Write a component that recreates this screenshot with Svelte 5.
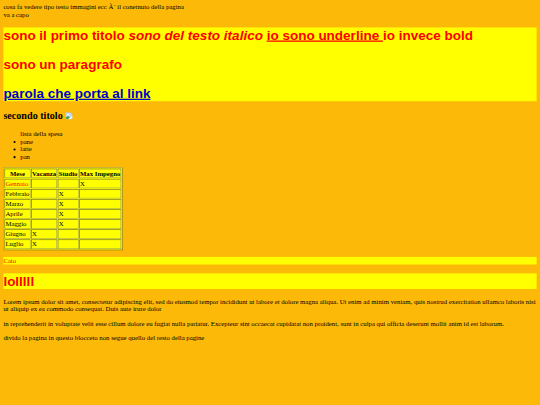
<script lang="ts">
  const shopping = ["pane", "latte", "pan"];
  const columns = ["Vacanza", "Studio", "Max Impegno"];

  const months = [
    { name: "Gennaio", column: 2 },
    { name: "Febbraio", column: 1 },
    { name: "Marzo", column: 1 },
    { name: "Aprile", column: 1 },
    { name: "Maggio", column: 1 },
    { name: "Giugno", column: 0 },
    { name: "Luglio", column: 0 },
  ];
</script>

<main class="page">
  cosa fa vedere tipo testo immagini ecc Ã¨ il conetnuto della pagina<br />
  va a capo

  <div class="title">
    <p>sono il primo titolo <i>sono del testo italico</i> <u>io sono underline&#32;</u><b>io invece bold</b></p>
    <p>sono un paragrafo</p>
    <p><a href="#link">parola che porta al link</a></p>
  </div>

  <h2>
    secondo titolo
    <svg class="broken" viewBox="0 0 16 16" aria-hidden="true">
      <path d="M.5.5h11l4 4v11H.5z" fill="#c4dcf7" stroke="#b8bcc0" />
      <path d="M11 .5v4.500h4.500z" fill="#fff" stroke="#a3a9ad" />
      <path d="M3 7a2 2 0 0 1 3-2 2 2 0 0 1 3 2z" fill="#fff" />
      <path d="M1 15v-3l5-4 4 3-4 4z" fill="#4ea441" />
      <path d="M16 8v3l-6 5H7z" fill="#fff" />
    </svg>
  </h2>

  <ul>
    lista della spesa
    {#each shopping as item}
      <li>{item}</li>
    {/each}
  </ul>

  <table>
    <thead>
      <tr>
        <th>Mese</th>
        {#each columns as column}
          <th>{column}</th>
        {/each}
      </tr>
    </thead>
    <tbody>
      {#each months as month, row}
        <tr>
          <td class:red={row === 0}>{month.name}</td>
          {#each columns as _, i}
            <td>{i === month.column ? "X" : ""}</td>
          {/each}
        </tr>
      {/each}
    </tbody>
  </table>

  <p class="name">Caio</p>
  <h1 class="title">lolllll</h1>

  <p>
    Lorem ipsum dolor sit amet, consectetur adipiscing elit, sed do eiusmod tempor incididunt ut labore et dolore magna
    aliqua. Ut enim ad minim veniam, quis nostrud exercitation ullamco laboris nisi ut aliquip ex ea commodo consequat.
    Duis aute irure dolor
  </p>
  <p>
    in reprehenderit in voluptate velit esse cillum dolore eu fugiat nulla pariatur. Excepteur sint occaecat cupidatat
    non proident, sunt in culpa qui officia deserunt mollit anim id est laborum.
  </p>
  <div>divido la pagina in questo blocceto non segue quello del resto della pagine</div>
</main>

<style>
  :global(body) {
    overflow: hidden;
    background: #fdb907;
  }

  :global(#app) {
    height: 405px;
    overflow: hidden;
  }

  /* 1280x960 page shown in a 540x405 window */
  .page {
    box-sizing: border-box;
    width: 1280px;
    height: 960px;
    padding: 8px;
    transform: scale(0.421875);
    transform-origin: 0 0;
    font: 16px/18px "Liberation Serif", "Times New Roman", serif;
    color: #000;
  }

  .title {
    margin: 21px 0;
    background: #ff0;
    color: #f00;
    font: bold 32px/37px "Liberation Sans", Arial, sans-serif;
  }

  .title p {
    margin: 0 0 32px;
  }

  .title p:last-child {
    margin-bottom: 0;
  }

  .title u {
    white-space: pre-wrap;
  }

  .title a {
    color: #00c;
  }

  h2 {
    margin: 20px 0;
    font-size: 24px;
    line-height: 28px;
  }

  .broken {
    width: 17px;
    height: 17px;
  }

  ul {
    margin: 20px 0 16px;
    padding-left: 40px;
  }

  table {
    border: 1px outset #808080;
    border-spacing: 2px;
    background: #ff0;
  }

  th,
  td {
    padding: 1px;
    border: 1px inset #808080;
    height: 18px;
  }

  .red {
    color: #f00;
  }

  p {
    margin: 16px 0;
  }

  .name {
    background: #ff0;
    color: #f00;
  }
</style>
